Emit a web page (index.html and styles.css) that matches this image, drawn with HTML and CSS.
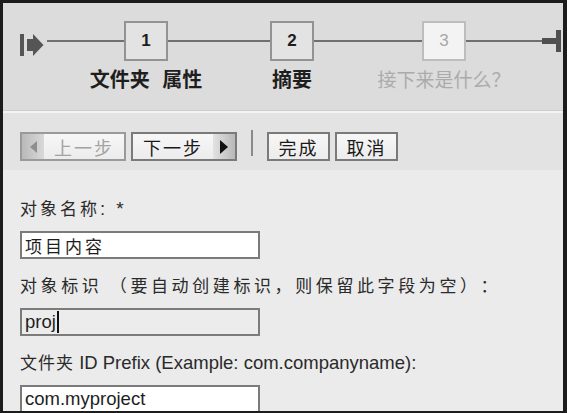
FILE: index.html
```html
<!DOCTYPE html>
<html lang="zh">
<head>
<meta charset="utf-8">
<title>向导</title>
<link rel="stylesheet" href="styles.css">
</head>
<body>
<div class="frame">
  <div class="steps">
    <div class="track">
      <svg class="start-icon" width="24" height="24" viewBox="0 0 24 24">
        <rect x="0" y="1" width="4" height="22" fill="#555"/>
        <rect x="7" y="6" width="7" height="12" fill="#555"/>
        <polygon points="13,1 23.5,12 13,23" fill="#555"/>
      </svg>
      <div class="line line-a"></div>
      <div class="step">
        <div class="box">1</div>
        <div class="label">文件夹 属性</div>
      </div>
      <div class="line line-b"></div>
      <div class="step">
        <div class="box">2</div>
        <div class="label">摘要</div>
      </div>
      <div class="line line-c"></div>
      <div class="step future">
        <div class="box">3</div>
        <div class="label">接下来是什么？</div>
      </div>
      <div class="line line-d"></div>
      <div class="end-icon">
        <span class="end-stem"></span><span class="end-bar"></span>
      </div>
    </div>
  </div>

  <div class="toolbar">
    <div class="btn nav disabled">
      <span class="seg seg-left"><span class="tri-left"></span></span>
      <span class="btn-text">上一步</span>
    </div>
    <div class="btn nav">
      <span class="btn-text">下一步</span>
      <span class="seg seg-right"><span class="tri-right"></span></span>
    </div>
    <span class="sep"></span>
    <div class="btn small"><span class="btn-text">完成</span></div>
    <div class="btn small"><span class="btn-text">取消</span></div>
  </div>

  <div class="form">
    <div class="flabel"><span class="cjk">对象名称</span>: <span class="star">*</span></div>
    <div class="field"><span class="cjk">项目内容</span></div>
    <div class="flabel"><span class="cjk wide">对象标识 （要自动创建标识，则保留此字段为空）：</span></div>
    <div class="field grey">proj<span class="caret"></span></div>
    <div class="flabel"><span class="cjk tight">文件夹</span> ID Prefix (Example: com.companyname):</div>
    <div class="field">com.myproject</div>
  </div>
</div>
</body>
</html>
```

FILE: styles.css
```css
html, body {
  margin: 0;
  padding: 0;
  background: #ebebeb;
}

body {
  font-family: "Liberation Sans", "Noto Sans CJK SC", sans-serif;
  color: #222;
  text-spacing-trim: space-all;
}

.frame {
  width: 567px;
  height: 413px;
  box-sizing: border-box;
  border: 3px solid #1c1c1c;
  border-right-width: 4px;
  border-bottom-width: 2px;
  overflow: hidden;
  background: #ebebeb;
}

/* ---------- steps ---------- */
.steps {
  height: 108px;
  box-sizing: border-box;
  background: #dcdcdc;
  border-bottom: 1px solid #cdcdcd;
  padding: 18px 0 0 17px;
}

.track {
  display: flex;
  align-items: flex-start;
}

.start-icon {
  display: block;
  margin-top: 12px;
  flex: none;
}

.line {
  height: 2px;
  background: #707070;
  margin-top: 19px;
  flex: none;
}
.line-a { width: 77px; margin-left: 3px; }
.line-b { width: 102px; }
.line-c { width: 108px; }
.line-d { width: 76px; }

.step {
  width: 44px;
  flex: none;
  display: flex;
  flex-direction: column;
  align-items: center;
}

.box {
  width: 44px;
  height: 40px;
  box-sizing: border-box;
  border: 2px solid #939393;
  background: #e3e3e3;
  display: flex;
  align-items: center;
  justify-content: center;
  font-family: "Liberation Sans", sans-serif;
  font-weight: bold;
  font-size: 17px;
  color: #1e1e1e;
}

.label {
  margin-top: 5px;
  white-space: nowrap;
  font-family: "Noto Sans CJK SC", sans-serif;
  font-weight: bold;
  font-size: 20px;
  line-height: 26px;
  color: #1e1e1e;
  word-spacing: 8px;
}

.future .box {
  border-color: #bdbdbd;
  background: #f3f3f3;
  font-weight: normal;
  color: #a8a8a8;
}

.future .label {
  font-weight: normal;
  font-size: 19px;
  color: #ababab;
}

.end-icon {
  display: flex;
  align-items: center;
  height: 24px;
  margin-top: 8px;
  flex: none;
}
.end-stem {
  display: block;
  width: 14px;
  height: 6px;
  background: #505050;
}
.end-bar {
  display: block;
  width: 5px;
  height: 22px;
  background: #505050;
}

/* ---------- toolbar ---------- */
.toolbar {
  height: 59px;
  box-sizing: border-box;
  background: #e3e3e3;
  border-top: 2px solid #f4f4f4;
  padding: 19px 0 0 17px;
  display: flex;
  align-items: flex-start;
}

.btn {
  height: 29px;
  box-sizing: border-box;
  border: 2px solid #7a7a7a;
  background: linear-gradient(#f7f7f7, #ececec);
  display: flex;
  align-items: stretch;
  font-family: "Noto Sans CJK SC", sans-serif;
  font-size: 18px;
  color: #1a1a1a;
  flex: none;
}

.btn + .btn { margin-left: 5px; }

.btn-text {
  flex: 1;
  display: flex;
  align-items: center;
  justify-content: center;
  letter-spacing: 2px;
  line-height: 1;
}

.nav { width: 106px; }
.small { width: 63px; }

.disabled { border-color: #9a9a9a; }
.disabled .btn-text { color: #a3a3a3; }

.seg {
  width: 22px;
  flex: none;
  display: flex;
  align-items: center;
  justify-content: center;
}
.seg-left { background: linear-gradient(to right, #b9b9b9, #d9d9d9); }
.seg-right { background: linear-gradient(to right, #e2e2e2, #b8b8b8); }

.tri-left {
  width: 0;
  height: 0;
  border-top: 6px solid transparent;
  border-bottom: 6px solid transparent;
  border-right: 7px solid #8f8f8f;
}
.tri-right {
  width: 0;
  height: 0;
  border-top: 7px solid transparent;
  border-bottom: 7px solid transparent;
  border-left: 8px solid #111;
}

.sep {
  display: block;
  width: 2px;
  height: 26px;
  background: #8a8a8a;
  margin: -2px 14px 0 14px;
  flex: none;
}

/* ---------- form ---------- */
.form {
  padding: 26px 0 0 17px;
}

.flabel {
  font-size: 18.5px;
  line-height: 24px;
  color: #2a2a2a;
  margin-bottom: 10px;
  white-space: nowrap;
}

.star {
  display: inline-block;
  margin-left: 6px;
  font-size: 19px;
}

.cjk {
  font-family: "Noto Sans CJK SC", sans-serif;
  font-size: 17px;
  letter-spacing: 3px;
}
.cjk.wide { letter-spacing: 3.6px; }
.cjk.tight { letter-spacing: 1px; }

.field {
  width: 240px;
  height: 28px;
  box-sizing: border-box;
  border: 2px solid #7b7b7b;
  background: #ffffff;
  padding: 0 0 0 3px;
  margin-bottom: 14px;
  display: flex;
  align-items: center;
  font-size: 18.5px;
  color: #1e1e1e;
}

.field.grey { background: #ececec; }

.caret {
  display: block;
  width: 2px;
  height: 22px;
  background: #111;
  margin-left: 1px;
}
```
